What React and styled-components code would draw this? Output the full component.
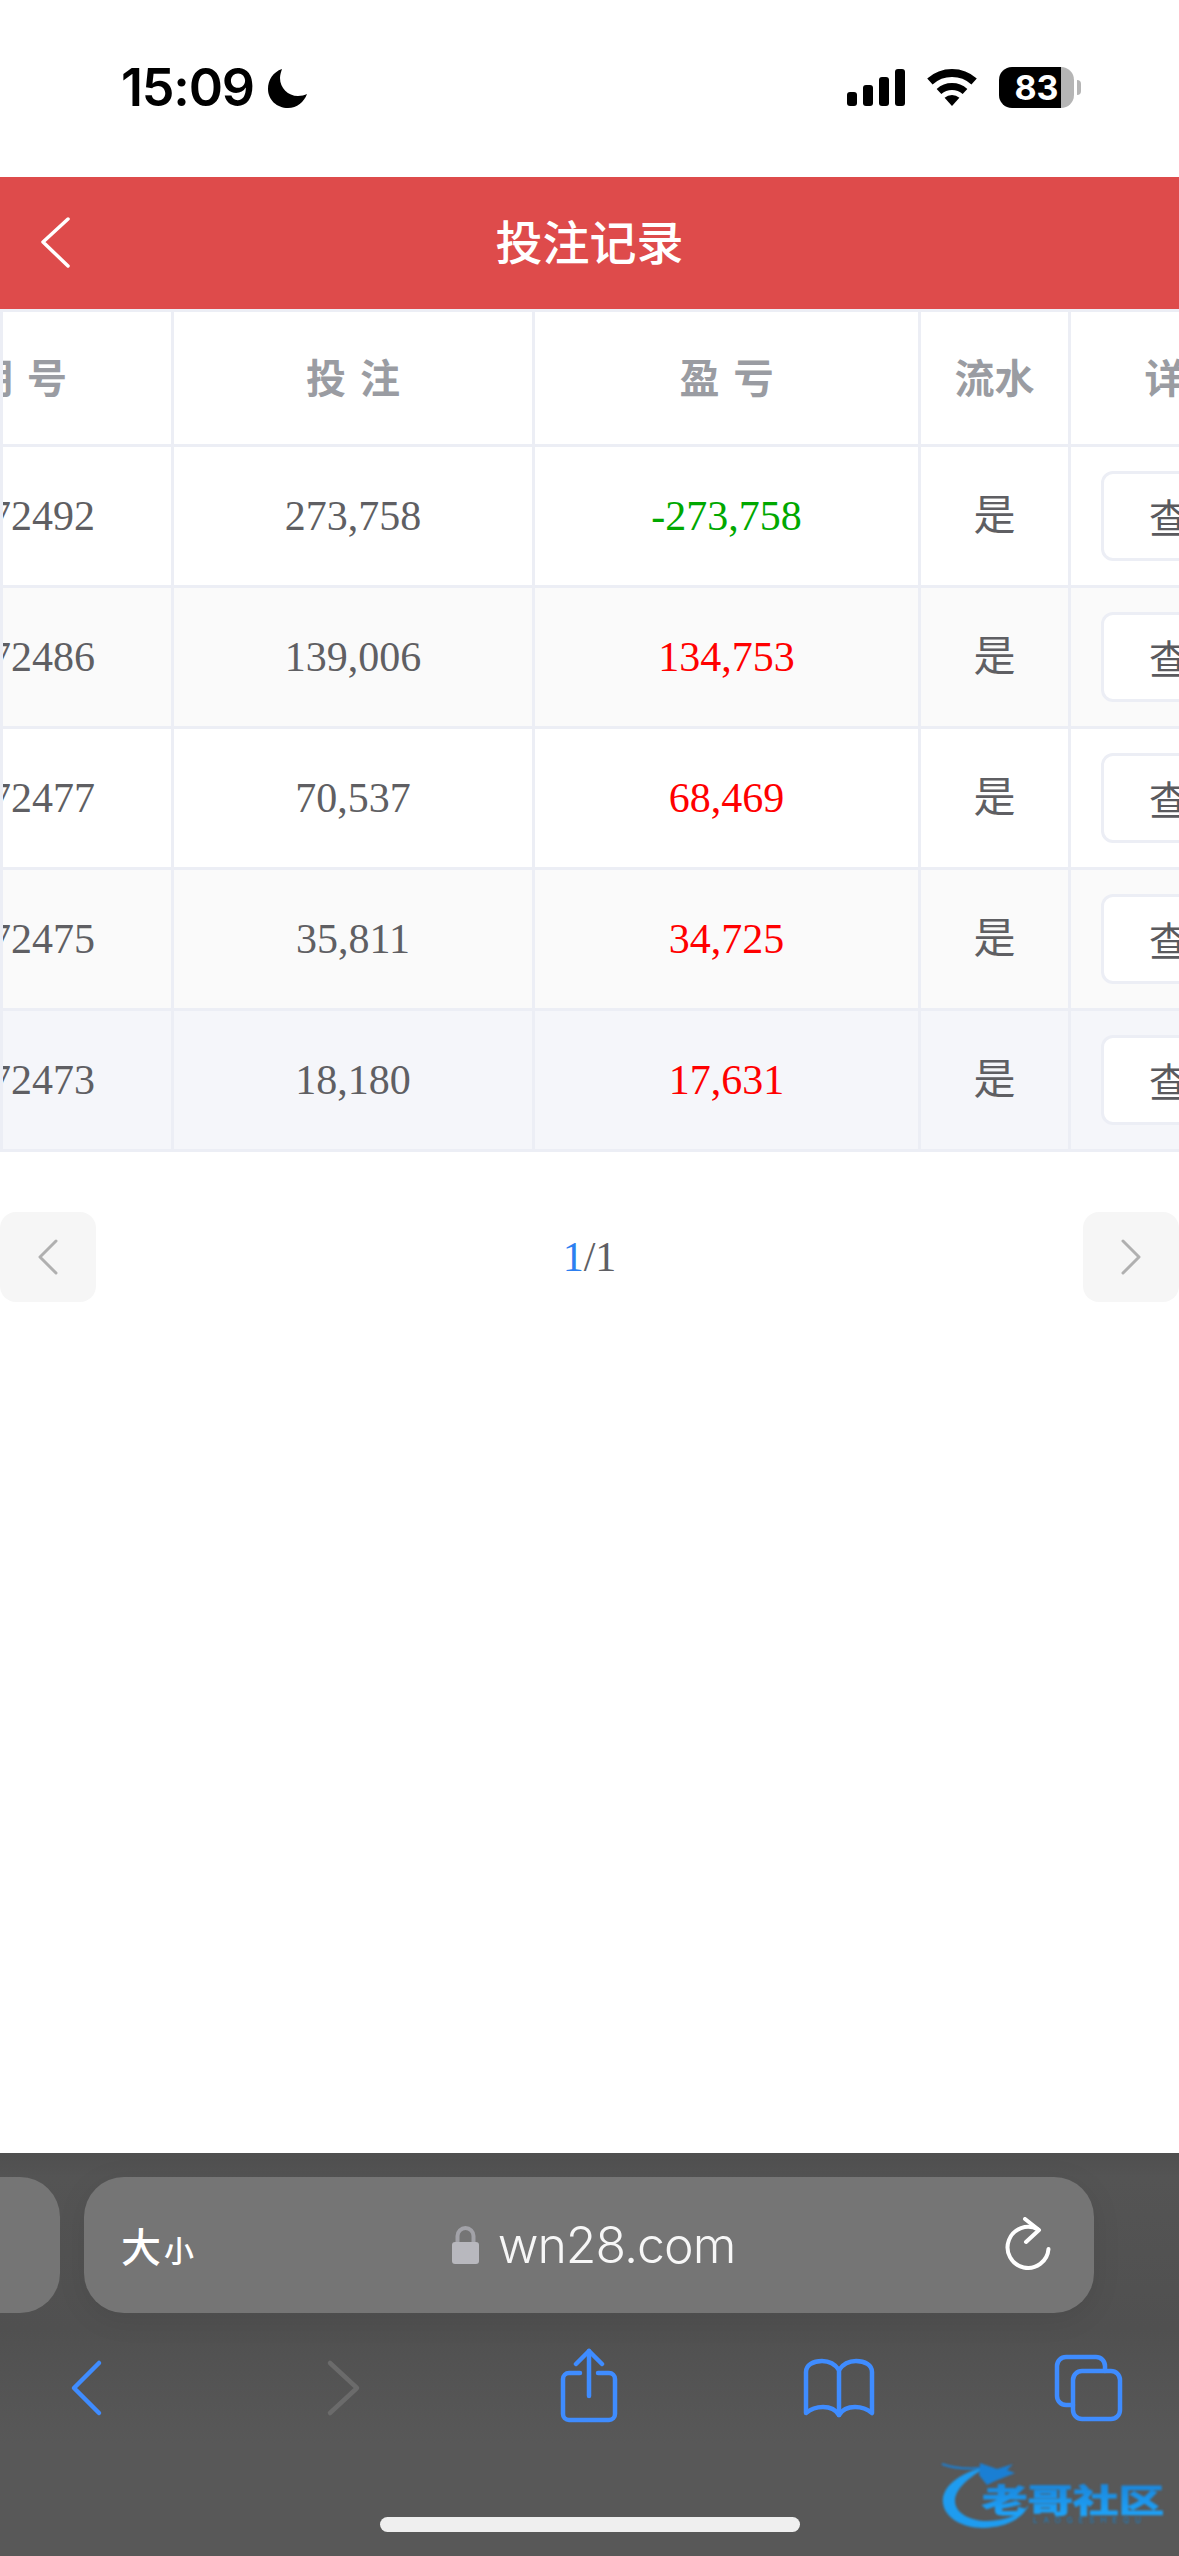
import React from "react";
import styled, { createGlobalStyle } from "styled-components";

const GlobalStyle = createGlobalStyle`
  html, body {
    margin: 0;
    padding: 0;
    background: #fff;
  }
`;

const Page = styled.div`
  width: 1179px;
  height: 2556px;
  display: flex;
  flex-direction: column;
  overflow: hidden;
  position: relative;
  background: #fff;
`;

const StatusBar = styled.div`
  height: 177px;
  box-sizing: border-box;
  padding: 67px 105px 0 121px;
  display: flex;
  align-items: flex-start;
`;

const Time = styled.span`
  font: 600 52px/42px Inter, sans-serif;
  letter-spacing: -1.2px;
  color: #000;
`;

const Moon = styled.svg`
  margin: 2px 0 0 14px;
`;

const StatusIcons = styled.div`
  margin-left: auto;
  display: flex;
  align-items: flex-start;
  gap: 22px;
  padding-top: 2px;
`;

const Battery = styled.div`
  position: relative;
  width: 75px;
  height: 41px;
  margin-top: -2px;
  border-radius: 13px;
  background: linear-gradient(90deg, #000 ${p => p.$level}%, #b5b5b5 ${p => p.$level}%);
  color: #fff;
  font: 700 34px/41px Inter, sans-serif;
  text-align: center;

  &::after {
    content: "";
    position: absolute;
    right: -7px;
    top: 13px;
    width: 4px;
    height: 15px;
    border-radius: 0 4px 4px 0;
    background: #b5b5b5;
  }
`;

const Header = styled.div`
  height: 132px;
  display: grid;
  grid-template-columns: 110px 1fr 110px;
  align-items: center;
  background: #de4b4b;
`;

const BackButton = styled.svg`
  margin-left: 38px;
  display: block;
`;

const Title = styled.h1`
  margin: 0;
  padding-bottom: 8px;
  text-align: center;
  color: #fff;
  font: 500 47px/1 "Noto Sans CJK SC", sans-serif;
`;

const TableScroll = styled.div`
  border-left: 3px solid #eceef5;
  overflow: hidden;
`;

const Table = styled.table`
  width: 1408px;
  margin-left: -110px;
  table-layout: fixed;
  border-collapse: separate;
  border-spacing: 0;
  border-top: 3px solid #eceef5;
`;

const Col = styled.col`
  width: ${p => p.$w}px;
`;

const HeadCell = styled.th`
  height: 135px;
  box-sizing: border-box;
  padding: 0 0 5px;
  border-right: 3px solid #eceef5;
  border-bottom: 3px solid #eceef5;
  color: #9a9ca2;
  font: 700 40px/1 "Noto Sans CJK SC", sans-serif;
  letter-spacing: ${p => (p.$spaced ? "14px" : "0")};
  text-indent: ${p => (p.$spaced ? "14px" : "0")};
  text-align: center;
`;

const IssueHeadCell = styled(HeadCell)`
  text-indent: 0;
  padding-right: 10px;
`;

const Row = styled.tr`
  background: ${p => p.$bg};
`;

const Cell = styled.td`
  height: 141px;
  box-sizing: border-box;
  padding: 0;
  border-right: 3px solid #eceef5;
  border-bottom: 3px solid #eceef5;
  color: ${p => p.$color || "#5f5f63"};
  font: 400 42px/1 "Liberation Serif", "Noto Sans CJK SC", serif;
  text-align: center;
`;

const ActionCell = styled(Cell)`
  text-align: left;
  padding-left: 30px;
`;

const ViewButton = styled.div`
  width: 176px;
  height: 90px;
  box-sizing: border-box;
  border: 3px solid #eceef5;
  border-radius: 12px;
  background: #fff;
  color: #5a5a5e;
  font: 400 40px/84px "Noto Sans CJK SC", sans-serif;
  text-align: center;
`;

const Pager = styled.div`
  margin-top: 60px;
  display: flex;
  align-items: center;
  justify-content: space-between;
`;

const PagerButton = styled.div`
  width: 96px;
  height: 90px;
  border-radius: 16px;
  background: #f6f6f6;
  display: flex;
  align-items: center;
  justify-content: center;
`;

const PagerText = styled.div`
  font: 400 42px/1 "Liberation Serif", serif;
  color: #5f5f63;
`;

const CurrentPage = styled.span`
  color: #2d7ff0;
`;

const Spacer = styled.div`
  flex: 1;
`;

const Toolbar = styled.div`
  position: relative;
  height: 403px;
  box-sizing: border-box;
  padding-top: 24px;
  background: linear-gradient(180deg, #4f4f4f 0, #545454 24px, #505050 175px, #585858 290px);
`;

const UrlRow = styled.div`
  display: flex;
  gap: 24px;
`;

const PrevTab = styled.div`
  width: 60px;
  height: 136px;
  border-radius: 0 40px 40px 0;
  background: #757575;
`;

const UrlBar = styled.div`
  width: 1010px;
  height: 136px;
  box-sizing: border-box;
  padding: 0 42px 0 37px;
  border-radius: 40px;
  background: #757575;
  box-shadow: 0 6px 30px rgba(0, 0, 0, 0.08);
  display: grid;
  grid-template-columns: 1fr auto 1fr;
  align-items: center;
  color: #fff;
`;

const FontSize = styled.div`
  display: flex;
  align-items: baseline;
  gap: 3px;
  font: 500 40px/1 "Noto Sans CJK SC", sans-serif;
  color: #fff;
`;

const SmallChar = styled.span`
  font-size: 30px;
`;

const Address = styled.div`
  margin-left: 14px;
  display: flex;
  align-items: center;
  gap: 19px;
  font: 300 50px/1 Inter, sans-serif;
  letter-spacing: -1px;
  color: #f7f7f7;
`;

const Reload = styled.svg`
  justify-self: end;
  display: block;
`;

const NavRow = styled.div`
  margin-top: 35px;
  padding-left: 68px;
  display: grid;
  grid-template-columns: 256px 233px 243px 251px auto;
`;

const NavIcon = styled.svg`
  display: block;
  fill: none;
  stroke: ${p => p.$color || "#3f8cff"};
  stroke-width: 4.5;
  stroke-linecap: round;
  stroke-linejoin: round;
`;

const HomeIndicator = styled.div`
  width: 420px;
  height: 15px;
  margin: 89px 0 0 380px;
  border-radius: 8px;
  background: #efefef;
`;

const Watermark = styled.svg`
  position: absolute;
  left: 935px;
  top: 302px;
  filter: blur(0.8px);
`;

const ROWS = [
  { id: "772492", bet: "273,758", profit: "-273,758", color: "#00a800", bg: "#fff" },
  { id: "772486", bet: "139,006", profit: "134,753", color: "#ff0000", bg: "#fafafa" },
  { id: "772477", bet: "70,537", profit: "68,469", color: "#ff0000", bg: "#fff" },
  { id: "772475", bet: "35,811", profit: "34,725", color: "#ff0000", bg: "#fafafa" },
  { id: "772473", bet: "18,180", profit: "17,631", color: "#ff0000", bg: "#f5f6fa" },
];

const Chevron = ({ right }) => (
  <svg width="24" height="40" viewBox="0 0 24 40" fill="none" stroke="#b0b0b0" strokeWidth="3" strokeLinecap="round" strokeLinejoin="round">
    <path d={right ? "M4 4 L20 20 L4 36" : "M20 4 L4 20 L20 36"} />
  </svg>
);

const App = () => (
  <Page>
    <GlobalStyle />
    <StatusBar>
      <Time>15:09</Time>
      <Moon width="39" height="39" viewBox="0 0 39 39">
        <path d="M14 0C5 3 0 11 0 20C0 31 9 39 20 39C29 39 36 33 39 25C37 26 33 27 30 27C20 27 12 19 12 9C12 6 13 3 14 0Z" />
      </Moon>
      <StatusIcons>
        <svg width="58" height="37" viewBox="0 0 58 37">
          <rect x="0" y="23" width="10" height="14" rx="3" />
          <rect x="16" y="16" width="10" height="21" rx="3" />
          <rect x="32" y="8" width="10" height="29" rx="3" />
          <rect x="48" y="0" width="10" height="37" rx="3" />
        </svg>
        <svg width="50" height="37" viewBox="0 0 50 37">
          <path d="M2.9 12.5A33 33 0 0 1 47.1 12.5" fill="none" stroke="#000" strokeWidth="8" />
          <path d="M12 22.5A19.5 19.5 0 0 1 38 22.5" fill="none" stroke="#000" strokeWidth="7" />
          <path d="M17.6 28.8A11 11 0 0 1 32.4 28.8L25 37Z" />
        </svg>
        <Battery $level={83}>83</Battery>
      </StatusIcons>
    </StatusBar>

    <Header>
      <BackButton width="36" height="58" viewBox="0 0 36 58" fill="none" stroke="#fff" strokeWidth="3.5" strokeLinecap="round" strokeLinejoin="round">
        <path d="M30 5 L5 28 L30 52" />
      </BackButton>
      <Title>投注记录</Title>
    </Header>

    <TableScroll>
      <Table>
        <colgroup>
          <Col $w={281} />
          <Col $w={361} />
          <Col $w={386} />
          <Col $w={150} />
          <Col $w={230} />
        </colgroup>
        <thead>
          <tr>
            <IssueHeadCell $spaced>期号</IssueHeadCell>
            <HeadCell $spaced>投注</HeadCell>
            <HeadCell $spaced>盈亏</HeadCell>
            <HeadCell>流水</HeadCell>
            <HeadCell>详情</HeadCell>
          </tr>
        </thead>
        <tbody>
          {ROWS.map(r => (
            <Row key={r.id} $bg={r.bg}>
              <Cell>{r.id}</Cell>
              <Cell>{r.bet}</Cell>
              <Cell $color={r.color}>{r.profit}</Cell>
              <Cell>是</Cell>
              <ActionCell>
                <ViewButton>查看</ViewButton>
              </ActionCell>
            </Row>
          ))}
        </tbody>
      </Table>
    </TableScroll>

    <Pager>
      <PagerButton>
        <Chevron />
      </PagerButton>
      <PagerText>
        <CurrentPage>1</CurrentPage>/1
      </PagerText>
      <PagerButton>
        <Chevron right />
      </PagerButton>
    </Pager>

    <Spacer />

    <Toolbar>
      <UrlRow>
        <PrevTab />
        <UrlBar>
          <FontSize>
            大<SmallChar>小</SmallChar>
          </FontSize>
          <Address>
            <svg width="27" height="38" viewBox="0 0 27 38">
              <path d="M5.5 17V10a8 8 0 0 1 16 0V17" fill="none" stroke="#a2a2a8" strokeWidth="4" />
              <rect x="0" y="16" width="27" height="22" rx="3" fill="#b8b8be" />
            </svg>
            wn28.com
          </Address>
          <Reload width="48" height="56" viewBox="0 0 48 56" fill="none" stroke="#fff" strokeWidth="4" strokeLinecap="round" strokeLinejoin="round">
            <path d="M34 12.5A20.5 20.5 0 1 0 44.5 32" />
            <path d="M21 2 L35 13 L22 25" />
          </Reload>
        </UrlBar>
      </UrlRow>

      <NavRow>
        <NavIcon width="40" height="80" viewBox="0 0 40 80">
          <path d="M31 15 L6 40 L31 65" />
        </NavIcon>
        <NavIcon width="40" height="80" viewBox="0 0 40 80" $color="#6b6b6b">
          <path d="M6 15 L33 40 L6 65" />
        </NavIcon>
        <NavIcon width="64" height="80" viewBox="0 0 64 80">
          <path d="M19 16 L32 3 L45 16" />
          <path d="M32 3 V48" />
          <path d="M23 25 H12 a6 6 0 0 0 -6 6 V66 a6 6 0 0 0 6 6 H52 a6 6 0 0 0 6 -6 V31 a6 6 0 0 0 -6 -6 H41" />
        </NavIcon>
        <NavIcon width="78" height="80" viewBox="0 0 78 80">
          <path d="M39 22C35 16 29 13 22 13C13 13 6 17 6 24V65C12 60 18 59 23 59C30 59 36 62 39 67C42 62 48 59 55 59C60 59 66 60 72 65V24C72 17 65 13 56 13C49 13 43 16 39 22Z" />
          <path d="M39 22V67" />
        </NavIcon>
        <NavIcon width="75" height="80" viewBox="0 0 75 80">
          <path d="M54 23V18a9 9 0 0 0 -9 -9H15a9 9 0 0 0 -9 9V48a9 9 0 0 0 9 9H22" />
          <rect x="22" y="23" width="47" height="48" rx="9" />
        </NavIcon>
      </NavRow>

      <HomeIndicator />

      <Watermark width="235" height="80" viewBox="0 0 235 80">
        <defs>
          <linearGradient id="wmText" x1="0" y1="0" x2="0" y2="1">
            <stop offset="0" stopColor="#1a7fd4" />
            <stop offset="1" stopColor="#1ea8ff" />
          </linearGradient>
        </defs>
        <path d="M52 12C20 18 6 35 8 48C10 66 35 76 58 72C75 70 88 62 94 50C85 60 70 66 52 66C35 66 20 58 20 46C20 34 34 22 52 12Z" fill="#1e9cf0" />
        <path d="M7 9C20 14 35 14 48 13" fill="none" stroke="#1a7fd4" strokeWidth="2" />
        <path d="M45 8L62 14L78 9L72 15L80 18L70 22L60 26L52 30L44 20Z" fill="#1a7fd4" />
        <text transform="translate(47 57) scale(1 0.72)" fontFamily="Noto Sans CJK SC, sans-serif" fontWeight="700" fontSize="45" textLength="182" lengthAdjust="spacingAndGlyphs" fill="url(#wmText)" stroke="url(#wmText)" strokeWidth="1.5">老哥社区</text>
        <text x="98" y="68" fontFamily="Inter, sans-serif" fontSize="8" textLength="108" fill="#1a7fc4">LAOGESHEQU</text>
      </Watermark>
    </Toolbar>
  </Page>
);

export default App;
